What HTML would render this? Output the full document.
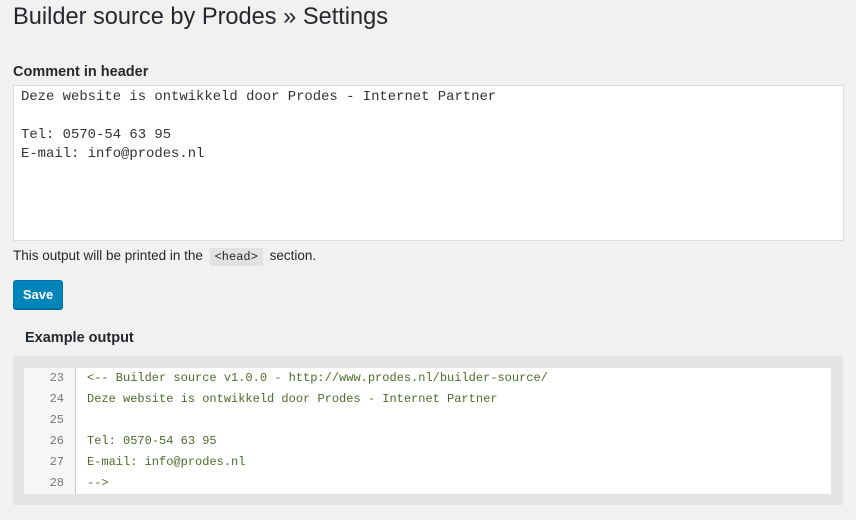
<!DOCTYPE html><html><head><style>
body{margin:0;background:#f1f1f1;font-family:"Liberation Sans",sans-serif;color:#23282d;width:856px;height:520px;overflow:hidden;position:relative}
.a{position:absolute}
h1{position:absolute;left:13px;top:4px;margin:0;font-size:23.6px;font-weight:400;color:#23282d}
.lbl{left:13px;top:64px;font-size:14.5px;font-weight:700}
.ta{left:13px;top:85px;width:815px;height:150px;background:#fff;border:1px solid #ddd;font:13.9px/19px "Liberation Mono",monospace;color:#333;padding:2px 7px;white-space:pre}
.desc{left:13px;top:248px;font-size:13.5px}
code{background:#e2e2e2;padding:2px 5px;font:12px "Liberation Mono",monospace;margin:0 3px}
.btn{left:13px;top:280px;width:48px;height:27px;background:#0085ba;border:1px solid #0073aa;border-radius:3px;color:#fff;font-size:13px;font-weight:700;text-align:center;line-height:27px;box-shadow:0 1px 0 #006799}
.ex{left:25px;top:330px;font-size:14.5px;font-weight:700}
.box{left:13px;top:356px;width:830px;height:149px;background:#e4e4e4}
.inner{left:24px;top:368px;width:807px;height:126px;background:#fff}
.g{left:24px;top:368px;width:51px;height:126px;border-right:1px solid #ccc;background:#f7f7f7}
.ln{position:absolute;font:12px/21px "Liberation Mono",monospace}
.n{left:24px;width:40px;text-align:right;color:#777}
.c{left:87px;color:#4d6b2c;white-space:pre}
</style></head><body>
<h1>Builder source by Prodes » Settings</h1>
<div class="a lbl">Comment in header</div>
<div class="a ta">Deze website is ontwikkeld door Prodes - Internet Partner

Tel: 0570-54 63 95
E-mail: info@prodes.nl</div>
<div class="a desc">This output will be printed in the <code>&lt;head&gt;</code> section.</div>
<div class="a btn">Save</div>
<div class="a ex">Example output</div>
<div class="a box"></div>
<div class="a inner"></div>
<div class="a g"></div>
<div class="ln n" style="top:368px">23<br>24<br>25<br>26<br>27<br>28</div>
<div class="ln c" style="top:368px">&lt;-- Builder source v1.0.0 - http://www.prodes.nl/builder-source/
Deze website is ontwikkeld door Prodes - Internet Partner

Tel: 0570-54 63 95
E-mail: info@prodes.nl
--&gt;</div>
</body></html>
